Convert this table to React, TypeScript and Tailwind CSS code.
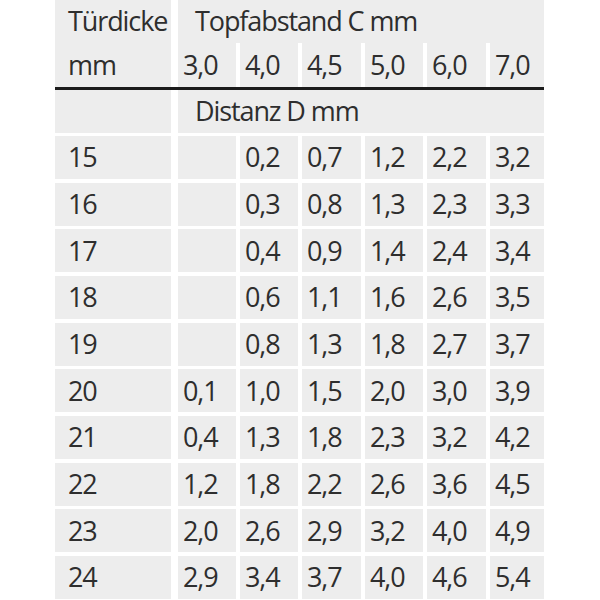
const rows: [string, string[]][] = [
  ["15", ["", "0,2", "0,7", "1,2", "2,2", "3,2"]],
  ["16", ["", "0,3", "0,8", "1,3", "2,3", "3,3"]],
  ["17", ["", "0,4", "0,9", "1,4", "2,4", "3,4"]],
  ["18", ["", "0,6", "1,1", "1,6", "2,6", "3,5"]],
  ["19", ["", "0,8", "1,3", "1,8", "2,7", "3,7"]],
  ["20", ["0,1", "1,0", "1,5", "2,0", "3,0", "3,9"]],
  ["21", ["0,4", "1,3", "1,8", "2,3", "3,2", "4,2"]],
  ["22", ["1,2", "1,8", "2,2", "2,6", "3,6", "4,5"]],
  ["23", ["2,0", "2,6", "2,9", "3,2", "4,0", "4,9"]],
  ["24", ["2,9", "3,4", "3,7", "4,0", "4,6", "5,4"]],
];

const colWidths = ["w-[58px]", "w-[58px]", "w-[59px]", "w-[58px]", "w-[59px]", "w-[54px]"];
const heads = ["3,0", "4,0", "4,5", "5,0", "6,0", "7,0"];

function App() {
  return (
    <div
      className="w-[600px] h-[600px] bg-white text-[#2e2e2e] text-[27px] tracking-[-1.1px] overflow-hidden"
      style={{ fontFamily: '"Open Sans", sans-serif' }}
    >
      <div className="ml-[55px] w-[489px] flex flex-col">
        {/* header */}
        <div className="flex gap-[7px] h-[87px]">
          <div className="w-[116px] bg-[#ededed] flex flex-col pl-[13px]">
            <div className="h-[43px] flex items-center">Türdicke</div>
            <div className="h-[44px] flex items-center">mm</div>
          </div>
          <div className="flex-1 flex flex-col">
            <div className="h-[43px] bg-[#ededed] flex items-center pl-[17px]">
              Topfabstand C mm
            </div>
            <div className="h-[44px] flex gap-1">
              {heads.map((h, i) => (
                <div key={h} className={`${colWidths[i]} bg-[#ededed] flex items-center pl-[5px]`}>
                  {h}
                </div>
              ))}
            </div>
          </div>
        </div>

        <div className="h-[3px] bg-[#1c1c1c]" />

        <div className="flex gap-[7px] h-[43px]">
          <div className="w-[116px] bg-[#ededed]" />
          <div className="flex-1 bg-[#ededed] flex items-center pl-[17px]">Distanz D mm</div>
        </div>

        <div className="flex flex-col gap-[3.67px] mt-[3px]">
          {rows.map(([d, vals]) => (
            <div key={d} className="flex gap-[7px] h-[43px]">
              <div className="w-[116px] bg-[#ededed] flex items-center pl-[13px]">{d}</div>
              <div className="flex gap-1">
                {vals.map((v, i) => (
                  <div key={i} className={`${colWidths[i]} bg-[#ededed] flex items-center pl-[5px]`}>
                    {v}
                  </div>
                ))}
              </div>
            </div>
          ))}
        </div>
      </div>
    </div>
  );
}

export default App;
